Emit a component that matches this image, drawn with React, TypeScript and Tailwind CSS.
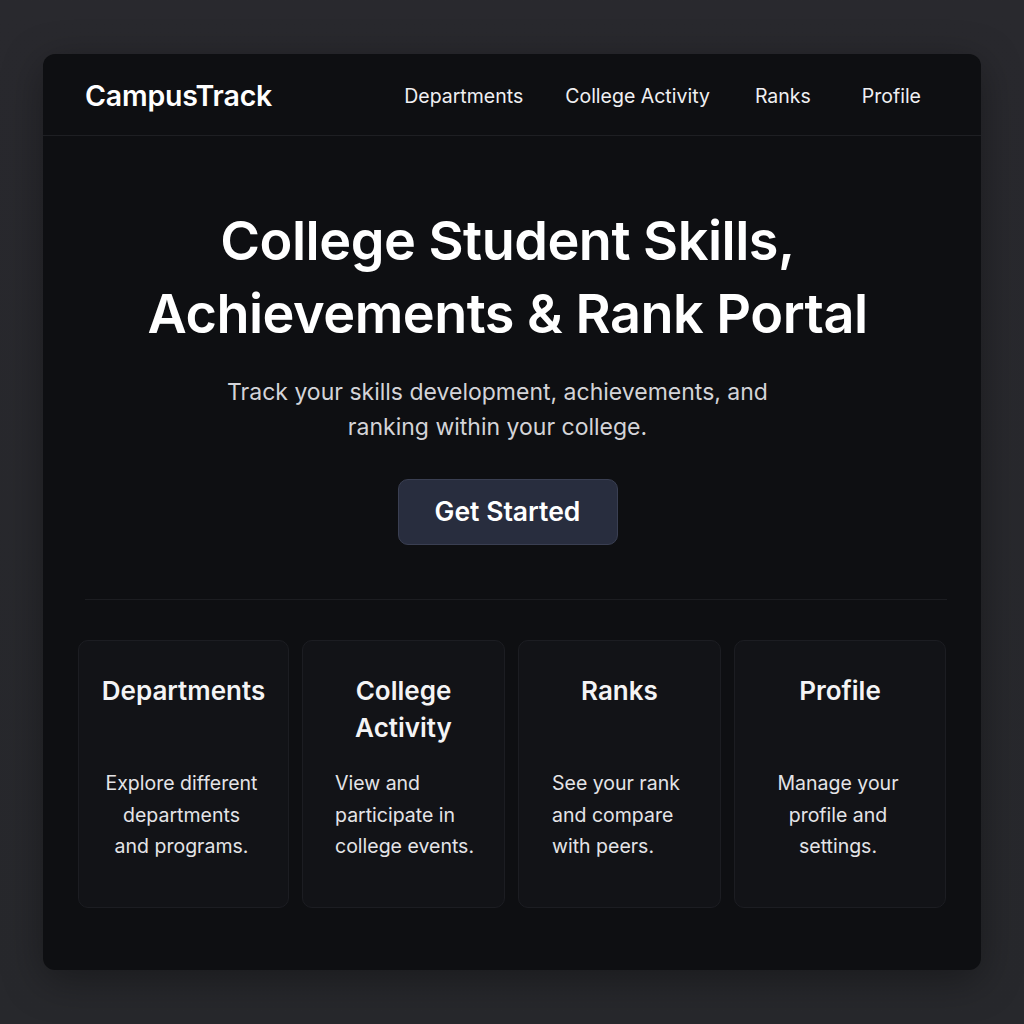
const navItems = [
	{label: 'Departments', gap: 'ml-0'},
	{label: 'College Activity', gap: 'ml-[42px]'},
	{label: 'Ranks', gap: 'ml-[45px]'},
	{label: 'Profile', gap: 'ml-[51px]'},
];

const cards = [
	{
		title: ['Departments'],
		desc: ['Explore different', 'departments', 'and programs.'],
		width: 'w-[211px]',
		align: 'text-center pr-[4px]',
	},
	{
		title: ['College', 'Activity'],
		desc: ['View and', 'participate in', 'college events.'],
		width: 'w-[203px]',
		align: 'text-left pl-[32px]',
	},
	{
		title: ['Ranks'],
		desc: ['See your rank', 'and compare', 'with peers.'],
		width: 'w-[203px]',
		align: 'text-left pl-[33px]',
	},
	{
		title: ['Profile'],
		desc: ['Manage your', 'profile and', 'settings.'],
		width: 'w-[212px]',
		align: 'text-center pr-[4px]',
	},
];

function FeatureCard({title, desc, width, align}: (typeof cards)[number]) {
	return (
		<div
			className={`${width} h-[268px] shrink-0 rounded-[10px] border border-[#1c1d22] bg-[#121317] pt-[31px]`}
		>
			<h3 className="h-[96px] text-center text-[26px] leading-[37px] font-semibold text-[#f4f4f5]">
				{title.map((line) => (
					<span key={line} className="block">
						{line}
					</span>
				))}
			</h3>
			<p className={`${align} text-[19.5px] leading-[31.5px] text-[#e4e4e7]`}>
				{desc.map((line) => (
					<span key={line} className="block whitespace-nowrap">
						{line}
					</span>
				))}
			</p>
		</div>
	);
}

export default function App() {
	return (
		<div
			className="min-h-[1024px] w-full bg-gradient-to-b from-[#29292e] to-[#27282c] pt-[54px] pl-[43px]"
			style={{fontFamily: 'Inter, "Noto Sans", sans-serif'}}
		>
			<div className="h-[916px] w-[938px] overflow-hidden rounded-[12px] bg-[#0e0f12] shadow-[0_10px_40px_rgba(0,0,0,0.35)]">
				<header className="flex h-[82px] items-center border-b border-[#1e1f23] pt-[4px] pr-[60px] pl-[42px]">
					<div className="text-[28.5px] font-semibold tracking-[-0.2px] text-white">
						CampusTrack
					</div>
					<nav className="ml-auto flex items-center text-[19.5px] text-[#f0f0f2]">
						{navItems.map((item) => (
							<a key={item.label} className={`${item.gap} cursor-pointer`}>
								{item.label}
							</a>
						))}
					</nav>
				</header>

				<section className="flex flex-col items-center pt-[68px] pr-[9px]">
					<h1 className="text-center text-[54px] leading-[73px] font-semibold tracking-[-0.5px] text-white">
						College Student Skills,
						<br />
						Achievements &amp; Rank Portal
					</h1>
					<p className="mt-[25px] mr-[20px] text-center text-[23px] leading-[35px] text-[#d4d4d8]">
						Track your skills development, achievements, and
						<br />
						ranking within your college.
					</p>
					<button className="mt-[34px] h-[66px] w-[220px] rounded-[10px] border border-[#3a3f52] bg-[#282d3e] text-[26.5px] font-semibold text-white">
						Get Started
					</button>
				</section>

				<div className="mt-[54px] mr-[34px] ml-[42px] border-t border-[#1c1d21]" />

				<section className="mt-[40px] flex gap-[13px] px-[35px]">
					{cards.map((card) => (
						<FeatureCard key={card.title.join(' ')} {...card} />
					))}
				</section>
			</div>
		</div>
	);
}
